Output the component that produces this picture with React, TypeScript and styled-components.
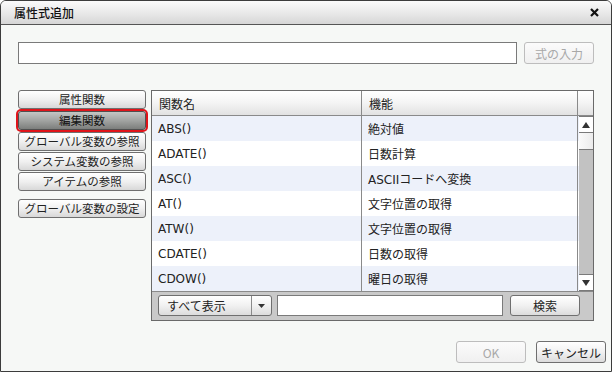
import styled, { createGlobalStyle, css } from "styled-components";

const GlobalStyle = createGlobalStyle`
  html, body {
    margin: 0;
    padding: 0;
    background: #ffffff;
  }
  body {
    font-family: "DejaVu Sans", "Noto Sans CJK JP", sans-serif;
    font-size: 12px;
    color: #222;
  }
  * {
    box-sizing: border-box;
  }
`;

const Dialog = styled.div`
  width: 612px;
  height: 372px;
  border: 1px solid #3c3c3c;
  border-radius: 6px 6px 0 0;
  background: #f6f8f6;
  display: flex;
  flex-direction: column;
  overflow: hidden;
`;

const TitleBar = styled.div`
  height: 24px;
  flex: none;
  display: flex;
  align-items: center;
  justify-content: space-between;
  padding: 0 11px 0 13px;
  background: linear-gradient(#fbfbfb, #e6e6e6 60%, #d6d6d6);
  border-bottom: 1px solid #555;
`;

const Title = styled.span`
  font-family: "Noto Sans CJK JP", sans-serif;
  font-size: 12px;
  font-weight: 500;
  color: #111;
`;

const CloseButton = styled.button`
  border: none;
  background: none;
  padding: 0;
  width: 12px;
  height: 12px;
  display: flex;
  align-items: center;
  justify-content: center;
  cursor: pointer;
`;

const Body = styled.div`
  flex: 1;
  display: flex;
  flex-direction: column;
  padding: 17px 5px 8px 17px;
`;

const FormulaRow = styled.div`
  display: flex;
  gap: 7px;
  height: 22px;
`;

const TextInput = styled.input<{ $width: number }>`
  width: ${(p) => p.$width}px;
  height: 100%;
  border: 1px solid #7a7a7a;
  background: #fff;
  padding: 0 4px;
  font: inherit;
  outline: none;
`;

const Button = styled.button<{ $width: number; $disabled?: boolean }>`
  width: ${(p) => p.$width}px;
  height: 22px;
  padding: 0;
  border: 1px solid #6f6f6f;
  border-radius: 3px;
  background: linear-gradient(#ffffff, #f1f1f1 50%, #dcdcdc);
  font-family: "Noto Sans CJK JP", sans-serif;
  font-size: 12px;
  color: #222;
  cursor: pointer;
  ${(p) =>
    p.$disabled &&
    css`
      border-color: #bdbdbd;
      background: linear-gradient(#fbfbfb, #f0f0f0);
      color: #a8a8a8;
      cursor: default;
    `}
`;

const MainRow = styled.div`
  display: flex;
  gap: 5px;
  margin-top: 26px;
`;

const SideMenu = styled.div`
  width: 128px;
  display: flex;
  flex-direction: column;
  gap: 1px;
`;

const MenuButton = styled.button<{ $active?: boolean; $spaced?: boolean }>`
  height: 19px;
  padding: 0;
  border: 1px solid #6f6f6f;
  border-radius: 3px;
  background: linear-gradient(#ffffff, #f0f0f0 50%, #d8d8d8);
  font-family: "Noto Sans CJK JP", sans-serif;
  font-size: 11.5px;
  line-height: 17px;
  color: #222;
  cursor: pointer;
  ${(p) => p.$spaced && css`margin-top: 7px;`}
  ${(p) =>
    p.$active &&
    css`
      background: linear-gradient(#c4c6c4, #a2a4a2 50%, #7c7e7c);
      border-color: #505050;
      box-shadow: 0 0 0 2px #e0141a;
      margin: 1px 0;
      color: #111;
    `}
`;

const Panel = styled.div`
  width: 443px;
  height: 231px;
  border: 1px solid #6a6a6a;
  background: #c9c9c9;
  display: flex;
  flex-direction: column;
`;

const Grid = styled.div`
  display: flex;
  height: 200px;
`;

const Table = styled.div`
  flex: 1;
  display: flex;
  flex-direction: column;
`;

const HeaderRow = styled.div`
  display: flex;
  height: 25px;
  border-bottom: 1px solid #8a8a8a;
  background: linear-gradient(#ffffff, #f4f4f4 50%, #e2e2e2);
`;

const Row = styled.div<{ $alt: boolean }>`
  display: flex;
  height: 25px;
  background: ${(p) => (p.$alt ? "#edf1fa" : "#ffffff")};
`;

const Cell = styled.div<{ $width: number; $head?: boolean }>`
  width: ${(p) => p.$width}px;
  display: flex;
  align-items: center;
  padding-left: 7px;
  padding-left: ${(p) => (p.$head ? 7 : 6)}px;
  border-right: 1px solid #8a8a8a;
  white-space: nowrap;
  color: #222;
  font-size: 12px;
`;

const ScrollColumn = styled.div`
  width: 14px;
  display: flex;
  flex-direction: column;
  background: #c0c0c0;
`;

const ScrollCorner = styled.div`
  height: 25px;
  border-bottom: 1px solid #8a8a8a;
  background: linear-gradient(#ffffff, #f4f4f4 50%, #e2e2e2);
`;

const ScrollArrow = styled.div`
  height: 17px;
  background: #ffffff;
  border-bottom: 1px solid #7a7a7a;
  border-top: 1px solid #7a7a7a;
  display: flex;
  align-items: center;
  justify-content: center;
  &:first-of-type {
    border-top: none;
  }
`;

const ScrollThumb = styled.div`
  height: 17px;
  background: linear-gradient(90deg, #fafafa, #ececec);
  border-bottom: 1px solid #7a7a7a;
`;

const ScrollTrack = styled.div`
  flex: 1;
  background: #c2c2c2;
`;

const Toolbar = styled.div`
  flex: 1;
  display: flex;
  align-items: center;
  padding: 0 0 1px 6px;
  border-top: 1px solid #8a8a8a;
  gap: 5px;
`;

const Select = styled.div`
  width: 114px;
  height: 21px;
  display: flex;
  border: 1px solid #6f6f6f;
  border-radius: 3px;
  background: linear-gradient(#ffffff, #f1f1f1 50%, #dcdcdc);
  font-family: "Noto Sans CJK JP", sans-serif;
  font-size: 12px;
`;

const SelectLabel = styled.span`
  flex: 1;
  padding-left: 8px;
  line-height: 19px;
  border-right: 1px solid #8a8a8a;
`;

const SelectCaret = styled.span`
  width: 19px;
  display: flex;
  align-items: center;
  justify-content: center;
`;

const SearchInput = styled(TextInput)`
  height: 21px;
`;

const SearchButton = styled(Button)`
  height: 21px;
  margin-left: 2px;
`;

const Footer = styled.div`
  margin-top: auto;
  display: flex;
  justify-content: flex-end;
  gap: 10px;
`;

const Triangle = ({ down }: { down?: boolean }) => (
  <svg width="8" height="6" viewBox="0 0 8 6">
    <path d={down ? "M0 0H8L4 6Z" : "M0 6H8L4 0Z"} fill="#333" />
  </svg>
);

const rows = [
  ["ABS()", "絶対値"],
  ["ADATE()", "日数計算"],
  ["ASC()", "ASCIIコードへ変換"],
  ["AT()", "文字位置の取得"],
  ["ATW()", "文字位置の取得"],
  ["CDATE()", "日数の取得"],
  ["CDOW()", "曜日の取得"],
];

const menu = [
  "属性関数",
  "編集関数",
  "グローバル変数の参照",
  "システム変数の参照",
  "アイテムの参照",
];

function App() {
  return (
    <>
      <GlobalStyle />
      <Dialog>
        <TitleBar>
          <Title>属性式追加</Title>
          <CloseButton aria-label="閉じる">
            <svg width="9" height="9" viewBox="0 0 9 9">
              <path d="M1 1L8 8M8 1L1 8" stroke="#111" strokeWidth="2.2" />
            </svg>
          </CloseButton>
        </TitleBar>
        <Body>
          <FormulaRow>
            <TextInput $width={499} />
            <Button $width={70} $disabled>
              式の入力
            </Button>
          </FormulaRow>
          <MainRow>
            <SideMenu>
              {menu.map((m, i) => (
                <MenuButton key={m} $active={i === 1}>
                  {m}
                </MenuButton>
              ))}
              <MenuButton $spaced>グローバル変数の設定</MenuButton>
            </SideMenu>
            <Panel>
              <Grid>
                <Table>
                  <HeaderRow>
                    <Cell $width={210} $head>
                      関数名
                    </Cell>
                    <Cell $width={216} $head>
                      機能
                    </Cell>
                  </HeaderRow>
                  {rows.map(([name, desc], i) => (
                    <Row key={name} $alt={i % 2 === 0}>
                      <Cell $width={210}>{name}</Cell>
                      <Cell $width={216}>{desc}</Cell>
                    </Row>
                  ))}
                </Table>
                <ScrollColumn>
                  <ScrollCorner />
                  <ScrollArrow>
                    <Triangle />
                  </ScrollArrow>
                  <ScrollThumb />
                  <ScrollTrack />
                  <ScrollArrow>
                    <Triangle down />
                  </ScrollArrow>
                </ScrollColumn>
              </Grid>
              <Toolbar>
                <Select>
                  <SelectLabel>すべて表示</SelectLabel>
                  <SelectCaret>
                    <svg width="7" height="4" viewBox="0 0 7 4">
                      <path d="M0 0H7L3.5 4Z" fill="#333" />
                    </svg>
                  </SelectCaret>
                </Select>
                <SearchInput $width={226} />
                <SearchButton $width={70}>検索</SearchButton>
              </Toolbar>
            </Panel>
          </MainRow>
          <Footer>
            <Button $width={70} $disabled>
              OK
            </Button>
            <Button $width={70}>キャンセル</Button>
          </Footer>
        </Body>
      </Dialog>
    </>
  );
}

export default App;
